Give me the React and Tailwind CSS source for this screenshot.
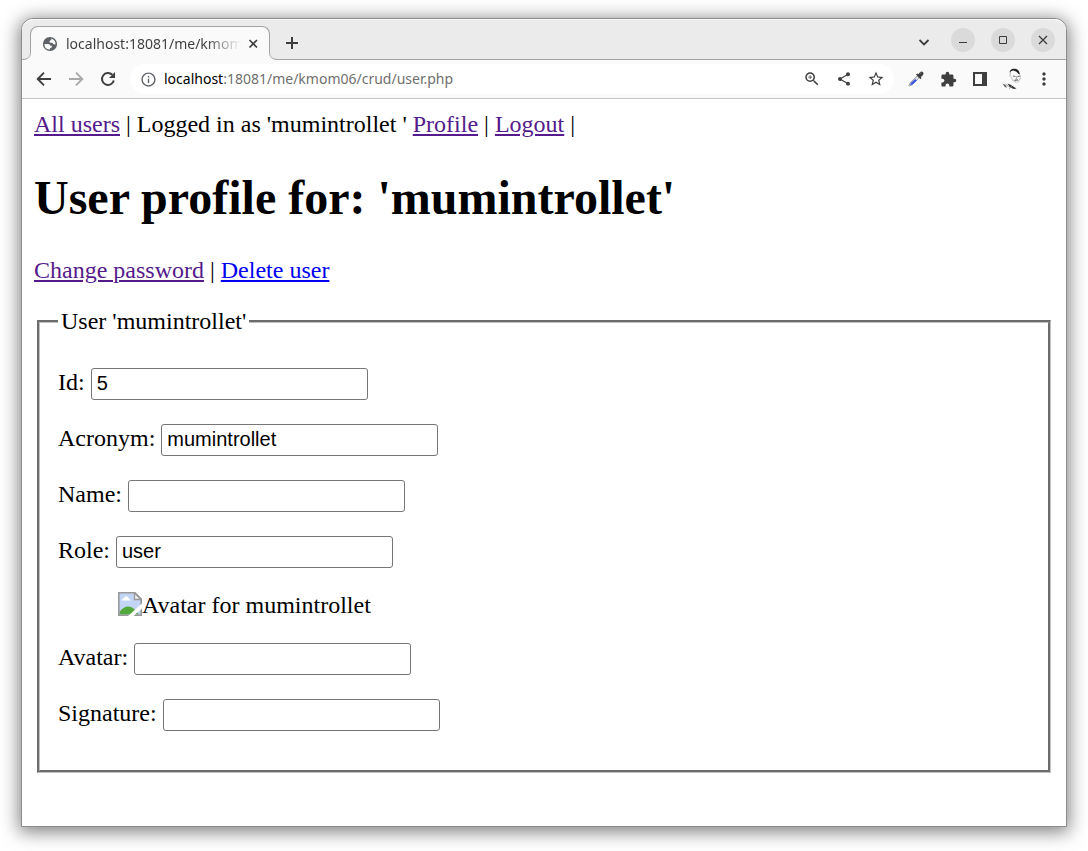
import {
  MdInfoOutline,
  MdOutlineZoomIn,
  MdShare,
  MdStarBorder,
  MdExtension,
  MdMoreVert,
} from 'react-icons/md';

function TabFlare({ side }) {
  const left = side === 'left';
  return (
    <svg
      className={left ? 'absolute bottom-0 -left-[9px]' : 'absolute bottom-0 -right-[9px]'}
      width="9"
      height="9"
      viewBox="0 0 9 9"
      aria-hidden="true"
    >
      <g transform={left ? undefined : 'translate(9 0) scale(-1 1)'}>
        <path d="M8 0H9V9H0V8.500C6 8.500 8 6 8 1Z" fill="#fafafa" />
        <path d="M8.500 0V1C8.500 6 6 8.500 0 8.500" fill="none" stroke="#a3a3a3" />
      </g>
    </svg>
  );
}

function GlobeIcon() {
  return (
    <svg className="shrink-0" width="16" height="16" viewBox="0 0 16 16" aria-hidden="true">
      <circle cx="8" cy="8" r="7.100" fill="#5f6368" />
      <path
        d="M9.300 2.500Q12.800 3.500 13.500 7L13.300 8.600L11.500 8.300L10.300 6.800H8.200L7.300 5.700L8.300 4.300H9.300Z"
        fill="#fafafa"
      />
      <path
        d="M2.500 8H5.800Q8.300 8.200 8.400 9.700H9.900V11.200L8.300 12L7.800 13.500Q3.200 13.400 2.500 9.500Z"
        fill="#fafafa"
      />
    </svg>
  );
}

function Tab() {
  return (
    <div className="relative ml-2 flex h-[34px] w-[240px] items-center rounded-t-lg border border-b-0 border-[#a3a3a3] bg-[#fafafa] pr-2 pl-[11px]">
      <TabFlare side="left" />
      <GlobeIcon />
      <span className="ml-2 w-[176px] overflow-hidden whitespace-nowrap bg-linear-to-r from-[#3c3c3c] from-80% to-transparent to-100% bg-clip-text text-sm text-transparent">
        localhost:18081/me/kmom06
      </span>
      <button type="button" aria-label="Close tab" className="ml-1 flex size-4 shrink-0 items-center justify-center">
        <svg width="10" height="10" viewBox="0 0 10 10" fill="none" stroke="#3c3c3c" strokeWidth="1.600">
          <path d="M1.500 1L9 8.500M9 1L1.500 8.500" />
        </svg>
      </button>
      <TabFlare side="right" />
    </div>
  );
}

function WindowButton({ label, children }) {
  return (
    <button type="button" aria-label={label} className="flex size-6 items-center justify-center rounded-full bg-[#dadada]">
      <svg width="16" height="16" viewBox="0 0 16 16" fill="none" stroke="#3d3d3d">
        {children}
      </svg>
    </button>
  );
}

function TitleBar() {
  return (
    <div className="flex h-[41px] items-end rounded-t-xl border-b border-[#a3a3a3] bg-[#ebebeb] shadow-[inset_0_1px_0_#f8f8f8]">
      <div className="-mb-px">
        <Tab />
      </div>
      <button type="button" aria-label="New tab" className="mb-[6px] ml-3 flex size-5 items-center justify-center">
        <svg width="12" height="12" viewBox="0 0 12 12" stroke="#3c3c3c" strokeWidth="2">
          <path d="M6 0V12M0 6H12" />
        </svg>
      </button>
      <div className="mb-[7px] ml-auto flex items-center gap-4 pr-[11px]">
        <button type="button" aria-label="Search tabs" className="mt-1 flex size-5 items-center justify-center">
          <svg width="12" height="8" viewBox="0 0 12 8" fill="none" stroke="#3c3c3c" strokeWidth="1.800">
            <path d="M.5 2L5 6.500L9.500 2" />
          </svg>
        </button>
        <WindowButton label="Minimize">
          <path d="M4 10.500H12" />
        </WindowButton>
        <WindowButton label="Maximize">
          <path d="M4.500 4.500H11.500V11.500H4.500Z" />
        </WindowButton>
        <WindowButton label="Close">
          <path d="M4 4L12 12M12 4L4 12" strokeWidth="1.300" />
        </WindowButton>
      </div>
    </div>
  );
}

function IconButton({ label, children }) {
  return (
    <button type="button" aria-label={label} className="flex size-5 items-center justify-center text-[#3f3f3f]">
      {children}
    </button>
  );
}

function ArrowIcon({ forward = false }) {
  return (
    <svg
      className={forward ? 'shrink-0 rotate-180 text-[#a9a9a9]' : 'shrink-0'}
      width="20"
      height="20"
      viewBox="0 0 20 20"
      fill="none"
      stroke="currentColor"
      strokeWidth="1.900"
    >
      <path d="M10 3.700L3.700 10L10 16.300M4 10H17" />
    </svg>
  );
}

function ReloadIcon() {
  return (
    <svg className="shrink-0" width="20" height="20" viewBox="0 0 20 20">
      <path d="M15.800 11.500A6 6 0 1 1 14.300 5.800" fill="none" stroke="currentColor" strokeWidth="2" />
      <path d="M17 3V9H11Z" fill="currentColor" />
    </svg>
  );
}

function EyedropperIcon() {
  return (
    <svg width="16" height="16" viewBox="0 0 16 16">
      <path d="M9.200 5L11 6.800L4.200 13.800L1.500 15L1 14.500L2.200 11.800Z" fill="#e4e4e8" stroke="#8b8b90" strokeWidth=".8" />
      <path d="M7.200 8L8.900 9.500L4.500 13.500L2.300 14.200L2.800 12Z" fill="#3454e4" />
      <path d="M8 3.600L9.300 2.500L10.300 3.300L12 1.200Q13.500 -.1 15 1.200Q16.200 2.700 14.800 4.200L12.800 6L13.500 7L12.400 8.200Z" fill="#3e3e40" />
      <path d="M12.200 2.400L13.300 1.500" stroke="#8b8b8b" />
    </svg>
  );
}

function ProfilePicture() {
  return (
    <svg width="20" height="22" viewBox="0 0 20 22" fill="none">
      <path d="M7.500 4.500Q8 1.200 11 .8Q15 .1 17 3.200L18 6.500L16.500 6L14.500 3.800L11.500 2.600L9.500 3Z" fill="#202020" />
      <path d="M8.500 4L8 8.500M18.200 7L18 11L15.700 14.500" stroke="#b5b5b5" />
      <path d="M9 8.500L10.500 12L14.500 14.500" stroke="#d2d2d2" strokeWidth="1.500" />
      <path d="M11 8L13.500 8.500M15.500 8.500L17.500 8.200M12.500 12.300L16 11.900" stroke="#666" strokeWidth="1.200" />
      <path d="M14.500 8.500L14.800 10.500L13.500 10.900" stroke="#999" />
      <path d="M.5 15.500L3.500 17L5 20L2.500 18.500Z" fill="#555" />
      <path d="M5.500 15.500L9 17L14.500 20.500L12 21L8 19.500Z" fill="#343434" />
      <path d="M3.500 16L6.500 18.500M7 20.500L10 18.500" stroke="#969696" />
    </svg>
  );
}

function Toolbar() {
  return (
    <div className="flex h-[39px] items-center border-b border-[#c3c3c3] bg-[#fafafa] pr-3 pl-3">
      <div className="flex items-center gap-3">
        <IconButton label="Back"><ArrowIcon /></IconButton>
        <IconButton label="Forward"><ArrowIcon forward /></IconButton>
        <IconButton label="Reload"><ReloadIcon /></IconButton>
      </div>
      <div className="ml-3 flex h-[30px] flex-1 items-center rounded-full bg-white pr-2 pl-2">
        <button type="button" aria-label="Site information" className="flex size-5 items-center justify-center text-[#5f6368]">
          <MdInfoOutline className="size-[17px]" />
        </button>
        <p className="ml-[6px] flex-1 truncate text-sm text-[#6f6f6f]">
          <span className="text-black">localhost</span>:18081/me/kmom06/crud/user.php
        </p>
        <div className="flex items-center gap-3">
          <IconButton label="Zoom"><MdOutlineZoomIn className="size-[18px]" /></IconButton>
          <IconButton label="Share"><MdShare className="size-4" /></IconButton>
          <IconButton label="Bookmark this page"><MdStarBorder className="size-[18px]" /></IconButton>
        </div>
      </div>
      <div className="ml-3 flex items-center gap-3">
        <IconButton label="Color picker"><EyedropperIcon /></IconButton>
        <IconButton label="Extensions"><MdExtension className="size-[17px]" /></IconButton>
        <IconButton label="Side panel">
          <svg width="14" height="14" viewBox="0 0 14 14">
            <path fillRule="evenodd" d="M0 0H14V14H0ZM2 2V12H9V2Z" fill="currentColor" />
          </svg>
        </IconButton>
        <IconButton label="Profile"><ProfilePicture /></IconButton>
        <IconButton label="Menu"><MdMoreVert className="size-[20px]" /></IconButton>
      </div>
    </div>
  );
}

function PageLink({ visited = true, children }) {
  return (
    <a href="#" className={visited ? 'text-[#551a8b] underline' : 'text-[#0000ee] underline'}>
      {children}
    </a>
  );
}

function Field({ id, label, value = '' }) {
  return (
    <p className="my-6 h-8 leading-[27px]">
      <label htmlFor={id}>{label}:</label>{' '}
      <input
        id={id}
        type="text"
        readOnly
        defaultValue={value}
        className="h-8 w-[277px] rounded-[3px] border border-[#767676] bg-white px-[5px] pb-[2px] font-['Liberation_Sans',Arial,sans-serif] text-xl leading-6 text-black"
      />
    </p>
  );
}

function BrokenImageIcon() {
  return (
    <svg className="inline-block align-bottom" width="24" height="24" viewBox="0 0 24 24" aria-hidden="true">
      <path d="M.8 .8H17L23.200 7V23.200H.8Z" fill="#c3d5f5" />
      <path d="M4 8Q4 6 6 6Q7 3.800 9 4.500Q11 5 11 7Q12.500 7 12.500 8.500H4Z" fill="#fff" />
      <path d="M1.500 22.500V20Q5.500 14.500 10 14.500Q14.500 14.500 17 18L21 22.500Z" fill="#52a83a" />
      <path d="M.8 .8H17L23.200 7V23.200H.8Z" fill="none" stroke="#999" strokeWidth="1.600" />
      <path d="M16.500 1V7.500H23Z" fill="#f2f2f2" stroke="#999" strokeWidth="1.300" />
      <path d="M24 11.500L10 24H15.500L24 16.500Z" fill="#fff" />
    </svg>
  );
}

function UserPage() {
  return (
    <main className="p-3 font-['Liberation_Serif','Times_New_Roman',serif] text-2xl leading-[27px] text-black">
      <nav>
        <PageLink>All users</PageLink> | Logged in as 'mumintrollet ' <PageLink>Profile</PageLink> |{' '}
        <PageLink>Logout</PageLink> |
      </nav>
      <h1 className="my-8 text-5xl leading-[55px] font-bold">User profile for: 'mumintrollet'</h1>
      <p className="mb-6">
        <PageLink>Change password</PageLink> | <PageLink visited={false}>Delete user</PageLink>
      </p>
      <fieldset className="mx-[3px] border-[3px] border-[#c0c0c0] px-[18px] pt-[9px] pb-[15px] [border-style:groove]">
        <legend className="px-[3px]">User 'mumintrollet'</legend>
        <Field id="user-id" label="Id" value="5" />
        <Field id="acronym" label="Acronym" value="mumintrollet" />
        <Field id="name" label="Name" />
        <Field id="role" label="Role" value="user" />
        <figure className="mx-[60px] flex items-start">
          <BrokenImageIcon />
          <span>Avatar for mumintrollet</span>
        </figure>
        <Field id="avatar" label="Avatar" />
        <Field id="signature" label="Signature" />
      </fieldset>
    </main>
  );
}

export default function App() {
  return (
    <div className="flex min-h-screen flex-col bg-white px-[21px] pt-[18px] pb-6">
      <div className="flex flex-1 flex-col rounded-t-xl border border-[#8c8c8c] bg-white shadow-[0_3px_18px_2px_rgba(0,0,0,0.5)]">
        <header className="font-['Noto_Sans',sans-serif]">
          <TitleBar />
          <Toolbar />
        </header>
        <UserPage />
      </div>
    </div>
  );
}
